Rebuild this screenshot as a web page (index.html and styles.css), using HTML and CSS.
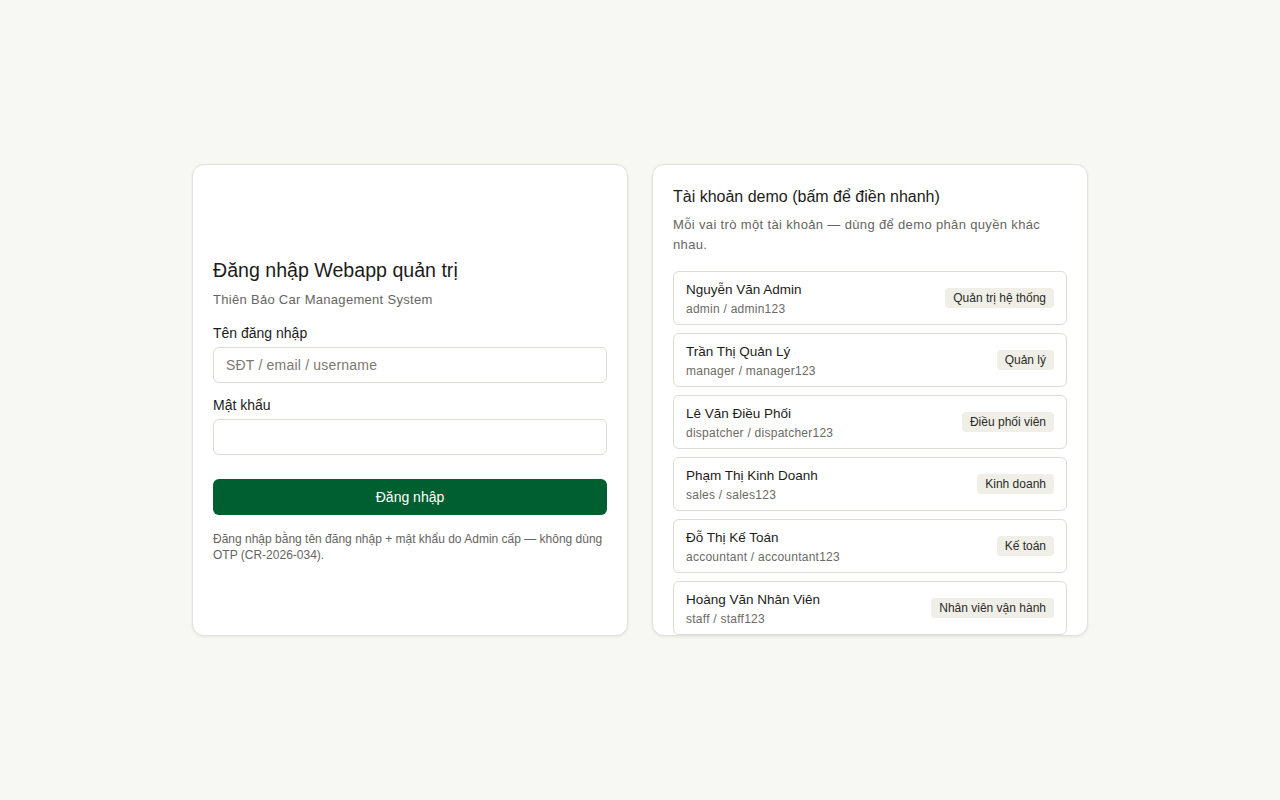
FILE: index.html
```html
<!DOCTYPE html>
<html lang="vi">
<head>
<meta charset="utf-8">
<title>Đăng nhập</title>
<link rel="stylesheet" href="styles.css">
</head>
<body>
<main class="page">
  <div class="grid">
    <section class="card login">
      <div class="login-inner">
        <h1 class="title">Đăng nhập Webapp quản trị</h1>
        <p class="subtitle">Thiên Bảo Car Management System</p>
        <form class="form">
          <label class="field">
            <span class="label">Tên đăng nhập</span>
            <input class="input" type="text" placeholder="SĐT / email / username">
          </label>
          <label class="field">
            <span class="label">Mật khẩu</span>
            <input class="input" type="password">
          </label>
          <button class="btn" type="button">Đăng nhập</button>
        </form>
        <p class="note">Đăng nhập bằng tên đăng nhập + mật khẩu do Admin cấp — không dùng OTP (CR-2026-034).</p>
      </div>
    </section>
    <section class="card demo">
      <h2 class="demo-title">Tài khoản demo (bấm để điền nhanh)</h2>
      <p class="demo-sub">Mỗi vai trò một tài khoản — dùng để demo phân quyền khác nhau.</p>
      <ul class="list">
        <li class="item"><div class="who"><div class="name">Nguyễn Văn Admin</div><div class="cred">admin / admin123</div></div><span class="badge">Quản trị hệ thống</span></li>
        <li class="item"><div class="who"><div class="name">Trần Thị Quản Lý</div><div class="cred">manager / manager123</div></div><span class="badge">Quản lý</span></li>
        <li class="item"><div class="who"><div class="name">Lê Văn Điều Phối</div><div class="cred">dispatcher / dispatcher123</div></div><span class="badge">Điều phối viên</span></li>
        <li class="item"><div class="who"><div class="name">Phạm Thị Kinh Doanh</div><div class="cred">sales / sales123</div></div><span class="badge">Kinh doanh</span></li>
        <li class="item"><div class="who"><div class="name">Đỗ Thị Kế Toán</div><div class="cred">accountant / accountant123</div></div><span class="badge">Kế toán</span></li>
        <li class="item"><div class="who"><div class="name">Hoàng Văn Nhân Viên</div><div class="cred">staff / staff123</div></div><span class="badge">Nhân viên vận hành</span></li>
      </ul>
    </section>
  </div>
</main>
</body>
</html>
```
FILE: styles.css
```css
* { box-sizing: border-box; }
html, body { margin: 0; padding: 0; }
body {
  background: #f7f7f3;
  font-family: "Liberation Sans", Arial, sans-serif;
  color: #1c1c1a;
}
.page {
  min-height: 800px;
  display: flex;
  align-items: center;
  justify-content: center;
}
.grid {
  display: grid;
  grid-template-columns: 436px 436px;
  gap: 24px;
  height: 472px;
}
.card {
  background: #fff;
  border: 1px solid #e2e1db;
  border-radius: 12px;
  box-shadow: 0 1px 3px rgba(0,0,0,0.08);
  padding: 20px;
  overflow: hidden;
}
.login { display: flex; flex-direction: column; justify-content: center; }
.login-inner { padding-top: 18px; }
.title { margin: 0; font-size: 19.6px; font-weight: 400; line-height: 28px; }
.subtitle { margin: 7px 0 0; font-size: 13px; letter-spacing: 0.3px; color: #66655f; line-height: 18px; }
.form { margin-top: 15px; display: flex; flex-direction: column; }
.field { display: flex; flex-direction: column; margin-bottom: 13px; }
.label { font-size: 14px; line-height: 18px; margin-bottom: 5px; }
.input {
  height: 36px;
  border: 1px solid #dcdbd5;
  border-radius: 6px;
  padding: 0 12px;
  font-family: inherit;
  font-size: 14px;
  letter-spacing: 0.2px;
  color: #1c1c1a;
  background: #fff;
  outline: none;
}
.input::placeholder { color: #7a7973; }
.btn {
  margin-top: 11px;
  height: 36px;
  border: 0;
  border-radius: 6px;
  background: #005f30;
  color: #fff;
  font-family: inherit;
  font-size: 14px;
}
.note { margin: 16px 0 0; font-size: 12px; line-height: 16px; color: #66655f; }
.demo-title { margin: 0; font-size: 16px; font-weight: 400; line-height: 24px; }
.demo-sub { margin: 6px 0 0; font-size: 13px; letter-spacing: 0.35px; line-height: 20px; color: #66655f; }
.list { list-style: none; margin: 16px 0 0; padding: 0; display: flex; flex-direction: column; gap: 8px; }
.item {
  display: flex;
  align-items: center;
  justify-content: space-between;
  flex: 0 0 54px;
  padding: 0 12px;
  border: 1px solid #dcdbd5;
  border-radius: 6px;
}
.who { padding-top: 2px; }
.name { font-size: 13.5px; line-height: 18px; }
.cred { font-size: 12px; letter-spacing: 0.25px; line-height: 18px; margin-top: 1px; color: #6b6a64; }
.badge {
  background: #f0efe7;
  border-radius: 4px;
  font-size: 12px;
  line-height: 16px;
  padding: 2px 8px;
  color: #2a2a27;
}
```
